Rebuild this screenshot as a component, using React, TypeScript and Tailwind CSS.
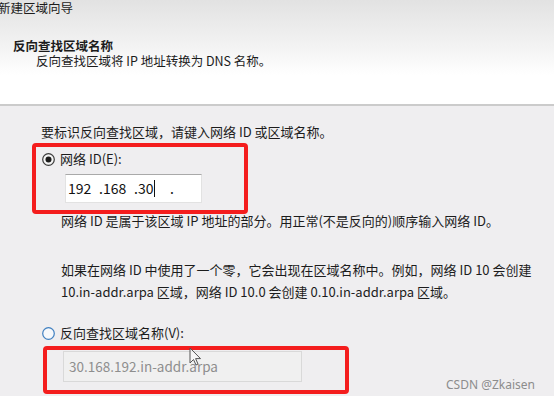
import React from 'react';

const font = { fontFamily: '"Noto Sans CJK SC", "Noto Sans", sans-serif' };

function Radio({ checked }: { checked?: boolean }) {
  return (
    <svg width="13" height="13" viewBox="0 0 13 13" className="shrink-0">
      <circle cx="6.5" cy="6.5" r="5.8" fill={checked ? '#f4f4f4' : '#f6f8fb'} stroke={checked ? '#3c3c3c' : '#3f7fc0'} strokeWidth="1.2" />
      {checked && <circle cx="6.5" cy="6.5" r="3" fill="#1b1b1b" />}
    </svg>
  );
}

export default function App() {
  return (
    <div className="relative h-[396px] w-[554px] overflow-hidden bg-[#efeef0] text-[#1c1c1c]" style={font}>
      {/* Header */}
      <div className="h-[104px] bg-[linear-gradient(to_bottom,#e2e2e2_0%,#f3f3f3_45%,#ffffff_72%,#ffffff_100%)]">
        <div className="-ml-[2px] text-[12.5px] leading-[16px]">新建区域向导</div>
        <div className="mt-[23px] pl-[13px] text-[12.5px] font-bold leading-[14px]">反向查找区域名称</div>
        <div className="mt-[1px] pl-[36px] text-[12.5px] leading-[14px]">反向查找区域将 IP 地址转换为 DNS 名称。</div>
      </div>
      <div className="h-[2px] bg-[#cbcbcb]" />

      {/* Body */}
      <div className="flex flex-col pl-[41px] pt-[18px] text-[13px]">
        <div className="leading-[16px]">要标识反向查找区域，请键入网络 ID 或区域名称。</div>

        <div className="mt-[11px] flex h-[16px] items-center gap-[5px] pl-[1px]">
          <Radio checked />
          <span className="leading-[16px]">网络 ID(E):</span>
        </div>

        <div className="ml-[24px] mt-[7px] flex h-[29px] w-[137px] items-center border border-[#e2e2e2] border-t-[#a9a9a9] bg-white pl-[2px] text-[14px] text-[#111]">
          <span className="w-[31px]">192</span>
          <span className="w-[35px]">.168</span>
          <span className="flex w-[36px] items-center">.30<span className="ml-[1px] inline-block h-[17px] w-[1px] bg-[#111]" /></span>
          <span>.</span>
        </div>

        <div className="ml-[20px] mt-[10px] leading-[16px]">网络 ID 是属于该区域 IP 地址的部分。用正常(不是反向的)顺序输入网络 ID。</div>

        <div className="ml-[20px] mt-[30px] leading-[22px]">
          <div>如果在网络 ID 中使用了一个零，它会出现在区域名称中。例如，网络 ID 10 会创建</div>
          <div>10.in-addr.arpa 区域，网络 ID 10.0 会创建 0.10.in-addr.arpa 区域。</div>
        </div>

        <div className="mt-[22px] flex h-[16px] items-center gap-[5px] pl-[1px]">
          <Radio />
          <span className="leading-[16px]">反向查找区域名称(V):</span>
        </div>

        <div className="ml-[22px] mt-[10px] flex h-[31px] w-[239px] items-center border border-[#d9d9d9] bg-[#f0f0f0] pl-[5px] text-[13.5px] text-[#8e8e8e]">
          30.168.192.in-addr.arpa
        </div>
      </div>

      {/* Annotations */}
      <div className="pointer-events-none absolute left-[32px] top-[143px] h-[71px] w-[216px] rounded-[4px] border-[4px] border-[#f41d1d]" />
      <div className="pointer-events-none absolute left-[43px] top-[346px] h-[48px] w-[306px] rounded-[4px] border-[4px] border-[#f41d1d]" />

      {/* Mouse cursor */}
      <svg className="absolute left-[189px] top-[347px]" width="14" height="20" viewBox="0 0 14 20">
        <path d="M1 1 L1 16 L4.5 12.5 L7 18 L9 17 L6.6 11.6 L11.5 11.6 Z" fill="#fafafa" fillOpacity="0.6" stroke="#555" strokeWidth="1" strokeLinejoin="round" />
      </svg>

      <div className="absolute left-[446px] top-[377px] text-[12px] leading-[16px] text-[#8c8c8c]" style={{ fontFamily: '"Noto Sans", sans-serif' }}>
        CSDN @Zkaisen
      </div>
    </div>
  );
}
